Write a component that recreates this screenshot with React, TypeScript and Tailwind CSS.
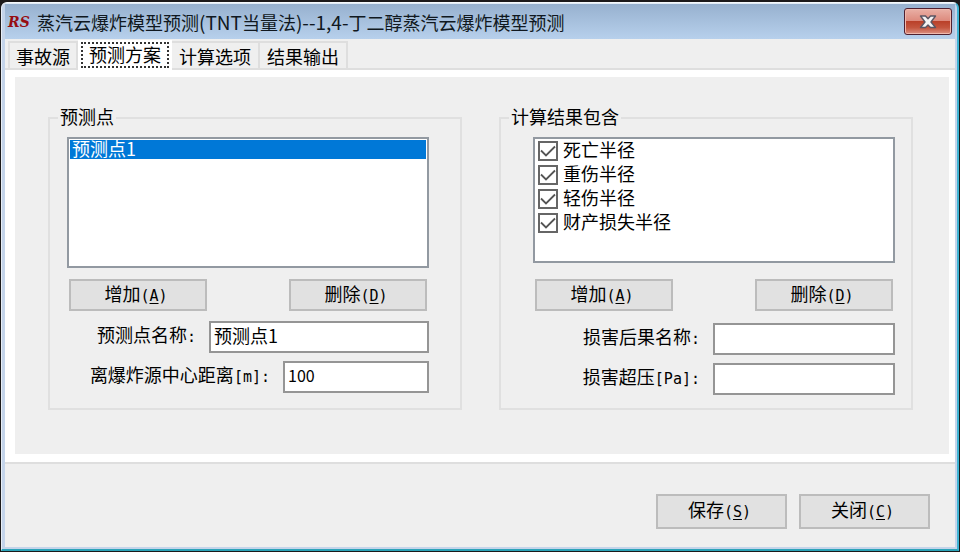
import React, { useState } from "react";
import { clsx } from "clsx";

const TABS = ["事故源", "预测方案", "计算选项", "结果输出"];
const RESULTS = ["死亡半径", "重伤半径", "轻伤半径", "财产损失半径"];

const inputClass =
  "h-8 border-2 border-[#959595] bg-white px-[3px] pb-1 text-black outline-none";

// Half-width characters, 9px per cell next to the 18px Chinese glyphs
function Half({ children }: { children: React.ReactNode }) {
  return <span className="font-['DejaVu_Sans_Mono',monospace] text-[15px]">{children}</span>;
}

function PushButton({
  label,
  hotkey,
  className,
}: {
  label: string;
  hotkey: string;
  className?: string;
}) {
  return (
    <button
      type="button"
      className={clsx("border-2 border-[#bcbcbc] bg-[#e1e1e1] pr-1 pb-[2px] leading-5", className)}
    >
      {label}
      <Half>
        (<u className="underline-offset-2">{hotkey}</u>)
      </Half>
    </button>
  );
}

function CloseButton() {
  return (
    <button
      type="button"
      aria-label="关闭"
      className="flex h-[27px] w-12 items-center justify-center rounded-[3px] border border-[#4f2030] bg-[linear-gradient(#e9b0a6,#dd8b7e_46%,#b93e27_47%,#c4563f_75%,#dc9183)] shadow-[inset_0_0_0_1px_#f0b9ae]"
    >
      <svg width="18" height="16" viewBox="0 0 18 16">
        <path
          d="M1.500 2h5L9 4.800 11.500 2h5L12 8l4.500 5.500h-5L9 11l-2.500 2.500h-5L6 8z"
          fill="#f4f4f4"
          stroke="#5b5663"
          strokeWidth="1.400"
          strokeLinejoin="round"
        />
      </svg>
    </button>
  );
}

function TitleBar() {
  return (
    <header className="flex h-9 items-center border-t border-[#e3edf7] bg-linear-to-b from-[#97b1cf] to-[#b7d0ec] px-[3px]">
      <span className="w-[29px] font-['DejaVu_Serif',serif] text-[14px] leading-4 font-bold text-[#970d12] italic">
        RS
      </span>
      <h1 className="flex-1 text-[18px] leading-6 whitespace-nowrap text-[#101820]">
        蒸汽云爆炸模型预测<span className="text-[19px]">(TNT</span>当量法
        <span className="text-[19px]">)--1,4-</span>丁二醇蒸汽云爆炸模型预测
      </h1>
      <CloseButton />
    </header>
  );
}

function TabBar({ active, onSelect }: { active: number; onSelect: (i: number) => void }) {
  return (
    <div role="tablist" className="flex h-[31px] items-end border-b-2 border-[#dedede] pl-[3px]">
      {TABS.map((tab, i) => (
        <button
          key={tab}
          type="button"
          role="tab"
          aria-selected={i === active}
          onClick={() => onSelect(i)}
          className={clsx(
            "leading-5",
            i === active
              ? "-mb-[2px] h-[30px] bg-white px-[3px]"
              : "h-[27px] border-t-2 border-r-2 border-[#dedede] px-[7px] first:border-l-2 first:px-[6px]"
          )}
        >
          {i === active ? (
            <span className="block border-2 border-dotted border-[#333] px-[6px] pb-[2px]">{tab}</span>
          ) : (
            tab
          )}
        </button>
      ))}
    </div>
  );
}

function Group({
  title,
  className,
  children,
}: {
  title: string;
  className: string;
  children: React.ReactNode;
}) {
  return (
    <fieldset className="min-w-0 flex-1 border-2 border-[#e0e0e0] pb-3">
      <legend className="ml-2 px-[2px] pb-1 leading-5">{title}</legend>
      <div className={clsx("pt-[7px]", className)}>{children}</div>
    </fieldset>
  );
}

function PointGroup() {
  const [name, setName] = useState("预测点1");
  const [distance, setDistance] = useState("100");

  return (
    <Group title="预测点" className="pr-[31px] pl-[17px]">
      <div className="h-[142px]">
        <select
          size={6}
          defaultValue="p1"
          aria-label="预测点"
          className="block h-[131px] w-full overflow-hidden border-2 border-[#9299a1] bg-white p-px outline-none"
        >
          <option
            value="p1"
            className="flex h-[19px] min-h-0 items-center bg-[linear-gradient(#0078d7,#0078d7)] p-0 pb-[3px] pl-[2px] leading-[19px] text-white [-webkit-text-fill-color:#fff]"
          >
            预测点1
          </option>
        </select>
      </div>
      <div className="flex justify-between px-[2px]">
        <PushButton label="增加" hotkey="A" className="h-8 w-[138px]" />
        <PushButton label="删除" hotkey="D" className="h-8 w-[138px]" />
      </div>
      <div className="mt-[10px] flex flex-col items-end gap-2">
        <div className="flex items-center gap-[13px]">
          <label htmlFor="point-name" className="pb-[3px]">
            预测点名称<Half>:</Half>
          </label>
          <input
            id="point-name"
            value={name}
            onChange={(e) => setName(e.target.value)}
            className={clsx(inputClass, "w-[220px]")}
          />
        </div>
        <div className="flex items-center gap-[13px]">
          <label htmlFor="point-distance" className="pb-[3px]">
            离爆炸源中心距离<Half>[m]:</Half>
          </label>
          <input
            id="point-distance"
            value={distance}
            onChange={(e) => setDistance(e.target.value)}
            className={clsx(inputClass, "w-[146px] text-[16px]")}
          />
        </div>
      </div>
    </Group>
  );
}

function ResultItem({ label }: { label: string }) {
  return (
    <label className="flex h-6 items-start gap-[5px] leading-5">
      <span className="relative mt-[2px] block size-5">
        <input
          type="checkbox"
          defaultChecked
          className="peer block size-5 appearance-none border-2 border-[#666] bg-white"
        />
        <svg
          viewBox="0 0 20 20"
          className="pointer-events-none absolute inset-0 hidden size-5 peer-checked:block"
        >
          <path d="M3 9.500l5 5L17 5.500" fill="none" stroke="#555" strokeWidth="1.800" />
        </svg>
      </span>
      {label}
    </label>
  );
}

function ResultGroup() {
  return (
    <Group title="计算结果包含" className="pr-4 pl-8">
      <div className="h-[142px]">
        <div className="h-[126px] border-2 border-[#9299a1] bg-white px-[3px]">
          {RESULTS.map((label) => (
            <ResultItem key={label} label={label} />
          ))}
        </div>
      </div>
      <div className="flex justify-between px-[2px]">
        <PushButton label="增加" hotkey="A" className="h-8 w-[138px]" />
        <PushButton label="删除" hotkey="D" className="h-8 w-[138px]" />
      </div>
      <div className="mt-3 flex flex-col items-end gap-2">
        <div className="flex items-center gap-[13px]">
          <label htmlFor="damage-name" className="pb-[3px]">
            损害后果名称<Half>:</Half>
          </label>
          <input id="damage-name" className={clsx(inputClass, "w-[182px]")} />
        </div>
        <div className="flex items-center gap-[13px]">
          <label htmlFor="damage-pressure" className="pb-[3px]">
            损害超压<Half>[Pa]:</Half>
          </label>
          <input id="damage-pressure" className={clsx(inputClass, "w-[182px]")} />
        </div>
      </div>
    </Group>
  );
}

export default function App() {
  const [active, setActive] = useState(1);

  return (
    <div className="flex min-h-screen bg-[#1c1a1b] pt-[2px] pr-px pb-px pl-px font-['Noto_Sans_CJK_SC',sans-serif] text-[18px] leading-6 text-black">
      <div className="flex flex-1 flex-col overflow-hidden rounded-t-[6px] border-t border-r-2 border-b-2 border-l border-t-[#f4f8fc] border-r-[#3fb4d4] border-b-[#2ba3b8] border-l-[#e8eef6] bg-[#c4d4ea] pr-[2px] pb-[2px] pl-[3px]">
        <TitleBar />
        <div className="flex flex-1 flex-col bg-[#efefef]">
          <TabBar active={active} onSelect={setActive} />
          <main className="flex flex-1 flex-col border-b-2 border-[#dedede] bg-white pt-[7px] pr-[6px] pb-2 pl-[10px]">
            <div className="flex flex-1 items-stretch gap-[37px] bg-[#efefef] pt-[29px] pr-9 pb-11 pl-[33px]">
              <PointGroup />
              <ResultGroup />
            </div>
          </main>
          <footer className="flex justify-end gap-3 pt-[30px] pr-[25px] pb-[18px]">
            <PushButton label="保存" hotkey="S" className="h-[35px] w-[131px]" />
            <PushButton label="关闭" hotkey="C" className="h-[35px] w-[131px]" />
          </footer>
        </div>
      </div>
    </div>
  );
}
